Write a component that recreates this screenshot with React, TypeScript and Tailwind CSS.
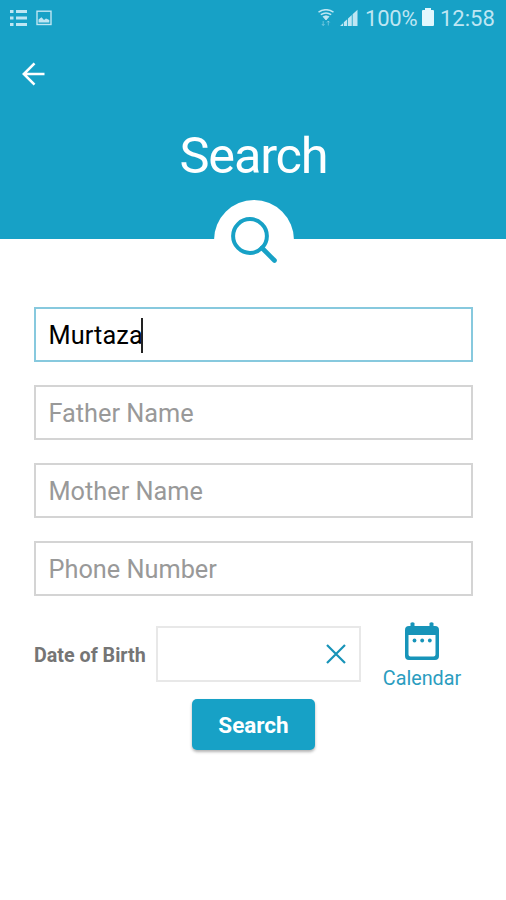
const FIELDS = [
  { label: 'Name', value: 'Murtaza', focused: true },
  { label: 'Father Name', value: '', focused: false },
  { label: 'Mother Name', value: '', focused: false },
  { label: 'Phone Number', value: '', focused: false },
];

function StatusBar() {
  return (
    <div className="h-9 flex items-center text-[#bfe6f3]">
      {/* Notifications */}
      <svg className="w-[18px] h-[18px] ml-[10px] shrink-0" viewBox="0 0 18 18" fill="currentColor">
        <path d="M0 1h3.5v3H0zM6 1h11v3H6zM0 7.5h3.5v3H0zM6 7.5h11v3H6zM0 14h3.5v3H0zM6 14h11v3H6z" />
      </svg>
      <svg className="w-4 h-4 ml-2 shrink-0" viewBox="0 0 16 16">
        <rect x="1" y="1.2" width="14" height="13.3" fill="none" stroke="currentColor" strokeWidth="1.4" />
        <path d="M2.5 12.5V9.5l3-2.2L8 10l2-1.5 3.3 1.5v2.5z" fill="currentColor" />
      </svg>

      {/* Wifi, signal, battery */}
      <svg className="w-[18px] h-[18px] ml-[265px] shrink-0" viewBox="0 0 18 18" fill="none" stroke="currentColor" strokeWidth="1.5">
        <path d="M1.5 3.2Q9-1.8 16.5 3.2" />
        <path d="M3.8 5.7Q9 2.2 14.2 5.7" />
        <path d="M6 7.6Q9 6 12 7.6L9 11z" fill="currentColor" strokeWidth="0.8" />
        <path d="M6.2 12v4.5M4.8 15l1.4 1.5L7.6 15M11.3 16.5V12M9.9 13.5l1.4-1.5 1.4 1.5" strokeWidth="0.8" opacity="0.6" />
      </svg>
      <svg className="w-[18px] h-[18px] ml-[5px] shrink-0" viewBox="0 0 18 18" fill="currentColor">
        <path d="M0 17l3-2.8V17zM3.8 13.3l3.4-3V17H3.8zM8 9.5l3.8-3.4V17H8zM12.6 5.2L17.5.7V17h-4.9z" />
      </svg>
      <span className="ml-[7px] w-[53px] shrink-0 text-[22px] leading-none tracking-[-0.2px] whitespace-nowrap pt-[2px]">100%</span>
      <svg className="w-3 h-[18px] ml-[4px] mb-[2px] shrink-0" viewBox="0 0 12 18" fill="#e2f7fd">
        <path d="M3 0h6v2h2q1 0 1 1v14q0 1-1 1H1q-1 0-1-1V3q0-1 1-1h2z" />
      </svg>
      <span className="ml-[6px] text-[22px] leading-none whitespace-nowrap pt-[2px]">12:58</span>
    </div>
  );
}

function Field({ label, value, focused }: { label: string; value: string; focused: boolean }) {
  return (
    <div className={`h-[55px] border-2 pl-[12.5px] pt-[3px] flex items-center text-[25.3px] leading-none ${focused ? 'border-[#87c9de]' : 'border-[#d4d4d4]'}`}>
      {value ? <span className="text-black tracking-[0.1px]">{value}</span> : <span className="text-[#999999]">{label}</span>}
      {focused && <span className="w-[2px] h-[35px] bg-[#222222] -ml-[2px] -mt-[2px]" />}
    </div>
  );
}

export default function App() {
  return (
    <div className="w-[506px] h-[900px] bg-white overflow-hidden font-['Roboto',sans-serif]">
      <header className="relative h-[239px] bg-[#17a1c6]">
        <StatusBar />
        <svg className="w-6 h-6 ml-[22px] mt-[26px] block" viewBox="0 0 24 24" fill="none" stroke="white" strokeWidth="2.6">
          <path d="M22.5 12H2.5M12.5 1.3L1.8 12l10.7 10.7" />
        </svg>
        <h1 className="mt-[45px] pl-[1px] text-center text-[50.5px] leading-[50px] tracking-[-1.2px] text-white">Search</h1>

        {/* Search badge hangs over the header edge */}
        <div className="absolute left-[214px] top-[200px] w-20 h-20 rounded-full bg-white">
          <svg className="w-20 h-20" viewBox="0 0 80 80" fill="none" stroke="#17a1c6">
            <circle cx="36" cy="36" r="16.9" strokeWidth="4" />
            <path d="M48 48l12.5 12.5" strokeWidth="4.6" strokeLinecap="round" />
          </svg>
        </div>
      </header>

      <main className="pt-[68px] pl-[34px] pr-[33px]">
        <div className="flex flex-col gap-[23px]">
          {FIELDS.map((field) => (
            <Field key={field.label} {...field} />
          ))}
        </div>

        {/* Date of birth */}
        <div className="mt-[25px] flex items-start">
          <span className="w-[122px] pt-[23px] text-[19.7px] leading-[24px] font-bold text-[#757575] whitespace-nowrap">Date of Birth</span>
          <div className="w-[205px] h-[56px] mt-[5px] border-2 border-[#e8e8e8] flex items-center justify-end pr-[13px]">
            <svg className="w-5 h-5" viewBox="0 0 20 20" fill="none" stroke="#1793b8" strokeWidth="2.2">
              <path d="M1 1l18 18M19 1L1 19" />
            </svg>
          </div>
          <div className="ml-[21px] w-[80px] flex flex-col items-center">
            <svg className="w-[34px] h-[38px] mt-px -ml-px" viewBox="0 0 34 38" fill="#1794b9">
              <path fillRule="evenodd" d="M5.5 1q2-1.5 4 0v3h15V1q2-1.5 4 0v3H30q4 0 4 4v26q0 4-4 4H4q-4 0-4-4V8q0-4 4-4h1.5zM3.5 13v19.5q0 2 2 2h23q2 0 2-2V13z" />
              <circle cx="9.5" cy="18.5" r="1.9" />
              <circle cx="17.2" cy="18.5" r="1.9" />
              <circle cx="24.8" cy="18.5" r="1.9" />
            </svg>
            <span className="mt-[7px] text-[19.8px] leading-[24px] text-[#2b9dbf]">Calendar</span>
          </div>
        </div>

        <button className="block mt-[8px] ml-[158px] w-[123px] h-[51px] rounded-[5px] bg-[#17a1c6] text-white text-[22.5px] font-bold leading-none pt-px shadow-[0_2px_3px_rgba(0,0,0,0.3)]">
          Search
        </button>
      </main>
    </div>
  );
}
